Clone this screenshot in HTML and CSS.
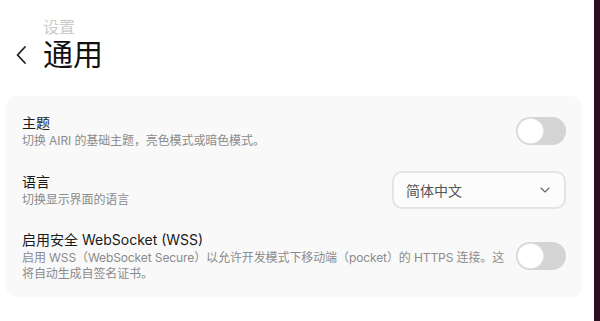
FILE: index.html
```html
<!DOCTYPE html>
<html lang="zh-CN">
<head>
<meta charset="utf-8">
<title>通用</title>
<link rel="stylesheet" href="styles.css">
</head>
<body>
<div class="app">
  <main class="page">
    <header class="head">
      <button class="back" aria-label="返回">
        <svg width="12" height="20" viewBox="0 0 12 20"><path d="M10 2 L2.5 10 L10 18" fill="none" stroke="#1f1f1f" stroke-width="1.8" stroke-linecap="round" stroke-linejoin="round"/></svg>
      </button>
      <div class="titles">
        <div class="crumb">设置</div>
        <h1 class="title">通用</h1>
      </div>
    </header>
    <section class="card">
      <div class="row">
        <div class="text">
          <div class="label">主题</div>
          <div class="desc">切换 AIRI 的基础主题，亮色模式或暗色模式。</div>
        </div>
        <div class="switch"><span class="knob"></span></div>
      </div>
      <div class="row">
        <div class="text">
          <div class="label">语言</div>
          <div class="desc">切换显示界面的语言</div>
        </div>
        <div class="select">
          <span>简体中文</span>
          <svg width="10" height="6" viewBox="0 0 10 6"><path d="M1 1 L5 5 L9 1" fill="none" stroke="#666" stroke-width="1.1" stroke-linecap="round" stroke-linejoin="round"/></svg>
        </div>
      </div>
      <div class="row">
        <div class="text">
          <div class="label">启用安全 WebSocket (WSS)</div>
          <div class="desc">启用 WSS（WebSocket Secure）以允许开发模式下移动端（pocket）的 HTTPS 连接。这将自动生成自签名证书。</div>
        </div>
        <div class="switch"><span class="knob"></span></div>
      </div>
    </section>
  </main>
  <div class="rail"></div>
</div>
</body>
</html>
```
FILE: styles.css
```css
* { box-sizing: border-box; }
html, body { margin: 0; padding: 0; }
body {
  background: #ffffff;
  font-family: "Inter", "Noto Sans CJK SC", sans-serif;
  color: #1c1c1c;
}
.app {
  display: flex;
  height: 321px;
  overflow: hidden;
}
.page {
  flex: 1;
  padding: 18px 12px 0 6px;
}
.rail {
  width: 6px;
  background: #2c0d24;
}
.head {
  display: flex;
  align-items: flex-end;
  gap: 16px;
  padding-left: 9px;
}
.back {
  border: 0;
  background: none;
  padding: 0;
  margin-bottom: 7px;
  width: 12px;
  height: 20px;
  display: flex;
}
.titles { display: flex; flex-direction: column; }
.crumb {
  font-size: 16px;
  line-height: 18px;
  color: #cbcbcb;
}
.title {
  margin: 0;
  font-size: 30px;
  line-height: 36px;
  font-weight: 400;
  color: #111;
}
.card {
  margin-top: 24px;
  background: #f9f9f9;
  border-radius: 10px;
  padding: 16px 16px 15px;
  display: flex;
  flex-direction: column;
  gap: 21px;
}
.row {
  display: flex;
  align-items: center;
  gap: 8px;
  min-height: 38px;
}
.text { flex: 1; min-width: 0; }
.label {
  font-size: 14px;
  line-height: 20px;
  color: #1a1a1a;
}
.desc {
  font-size: 12px;
  line-height: 16px;
  color: #8b8b8b;
  letter-spacing: -0.1px;
}
.switch {
  width: 50px;
  height: 28px;
  border-radius: 14px;
  background: #d4d4d4;
  padding: 2px;
  flex-shrink: 0;
}
.knob {
  display: block;
  width: 25px;
  height: 24px;
  border-radius: 50%;
  background: #fff;
  box-shadow: 0 0 0 1px #e6e6e6;
}
.select {
  width: 174px;
  height: 38px;
  border: 2px solid #e4e4e4;
  border-radius: 10px;
  background: #fcfcfc;
  display: flex;
  align-items: center;
  justify-content: space-between;
  padding: 0 14px 0 12px;
  font-size: 14px;
  color: #555;
  flex-shrink: 0;
}
```
